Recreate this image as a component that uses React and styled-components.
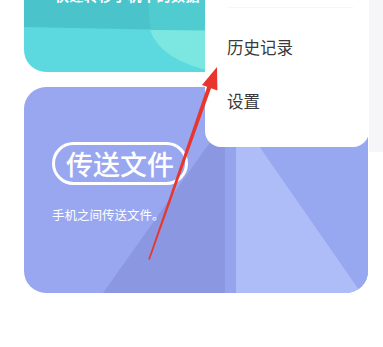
import React from "react";
import styled, { createGlobalStyle } from "styled-components";

const Global = createGlobalStyle`
  html, body { margin: 0; padding: 0; background: #ffffff; }
  body { font-family: "Noto Sans CJK SC", "Noto Sans", sans-serif; }
`;

const Page = styled.div`
  position: relative;
  width: 383px;
  height: 347px;
  overflow: hidden;
  background: #ffffff;
`;

const Cards = styled.div`
  display: flex;
  flex-direction: column;
  gap: 15px;
  padding-left: 24px;
  width: 344px;
`;

const Card = styled.div`
  position: relative;
  overflow: hidden;
  width: 344px;
  height: ${(p) => p.$h}px;
  margin-top: ${(p) => p.$mt || 0}px;
  border-radius: 22px;
  background: ${(p) => p.$bg};
`;

const Art = styled.svg`
  position: absolute;
  inset: 0;
  width: 100%;
  height: 100%;
`;

const CardBody = styled.div`
  position: relative;
  display: flex;
  flex-direction: column;
  align-items: flex-start;
  padding: ${(p) => p.$pad};
`;

const TopText = styled.div`
  color: #ffffff;
  font-size: 14px;
  font-weight: 700;
  line-height: 20px;
  letter-spacing: 0.5px;
`;

const Pill = styled.div`
  box-sizing: border-box;
  width: 136px;
  height: 43px;
  border: 3px solid #ffffff;
  border-radius: 22px;
  display: flex;
  align-items: center;
  justify-content: center;
  color: #ffffff;
  font-size: 27px;
  font-weight: 500;
  line-height: 1;
`;

const Sub = styled.div`
  margin-top: 21px;
  color: #ffffff;
  font-size: 12.5px;
  line-height: 18px;
`;

const Popup = styled.div`
  position: absolute;
  top: 0;
  left: 205px;
  display: flex;
  align-items: flex-start;
`;

const Menu = styled.div`
  box-sizing: border-box;
  width: 164px;
  height: 147px;
  background: #ffffff;
  border-radius: 0 0 16px 16px;
  padding: 7px 0 0 22px;
  display: flex;
  flex-direction: column;
`;

const Divider = styled.div`
  width: 126px;
  height: 1px;
  background: #f6f6f7;
`;

const Item = styled.div`
  color: #3a3a3a;
  font-size: 16.5px;
  line-height: 24px;
  margin-top: ${(p) => p.$mt}px;
`;

const Strip = styled.div`
  width: 14px;
  height: 152px;
  background: #f6f6f8;
`;

const Overlay = styled.svg`
  position: absolute;
  left: 0;
  top: 0;
  width: 383px;
  height: 347px;
  pointer-events: none;
`;

export default function App() {
  return (
    <Page>
      <Global />
      <Cards>
        <Card $h={120} $mt={-48} $bg="#5cd8df">
          <Art viewBox="0 0 344 120" preserveAspectRatio="none">
            <path d="M0 0 H344 V81 Q200 79 0 75 Z" fill="#4ac4ca" />
            <path d="M124 0 Q122 50 127 78 L344 81 V0 Z" fill="#50cbd0" />
            <path d="M126 78 Q136 108 190 120 H344 V81 Q240 79 126 78 Z" fill="#7ce7e0" />
          </Art>
          <CardBody $pad="33px 0 0 31px">
            <TopText>快速转移手机中的数据</TopText>
          </CardBody>
        </Card>
        <Card $h={206} $bg="#98a7f0">
          <Art viewBox="0 0 344 206" preserveAspectRatio="none">
            <path d="M212 0 H344 V206 H212 Z" fill="#aebdf8" />
            <path d="M194 0 H344 V216 Z" fill="#98a8f0" />
            <path d="M79 206 L201 34 V206 Z" fill="#8c97e2" />
            <path d="M201 0 H212 V206 H201 Z" fill="#96a4ed" />
          </Art>
          <CardBody $pad="55px 0 0 28px">
            <Pill>传送文件</Pill>
            <Sub>手机之间传送文件。</Sub>
          </CardBody>
        </Card>
      </Cards>
      <Popup>
        <Menu>
          <Divider />
          <Item $mt={27}>历史记录</Item>
          <Item $mt={30}>设置</Item>
        </Menu>
        <Strip />
      </Popup>
      <Overlay viewBox="0 0 383 347">
        <polygon points="148.3,259.2 149.8,259.8 211.5,87 207.6,85.6" fill="#e8352e" />
        <polygon points="217,67 217.4,90.6 202,85" fill="#e8352e" />
      </Overlay>
    </Page>
  );
}
